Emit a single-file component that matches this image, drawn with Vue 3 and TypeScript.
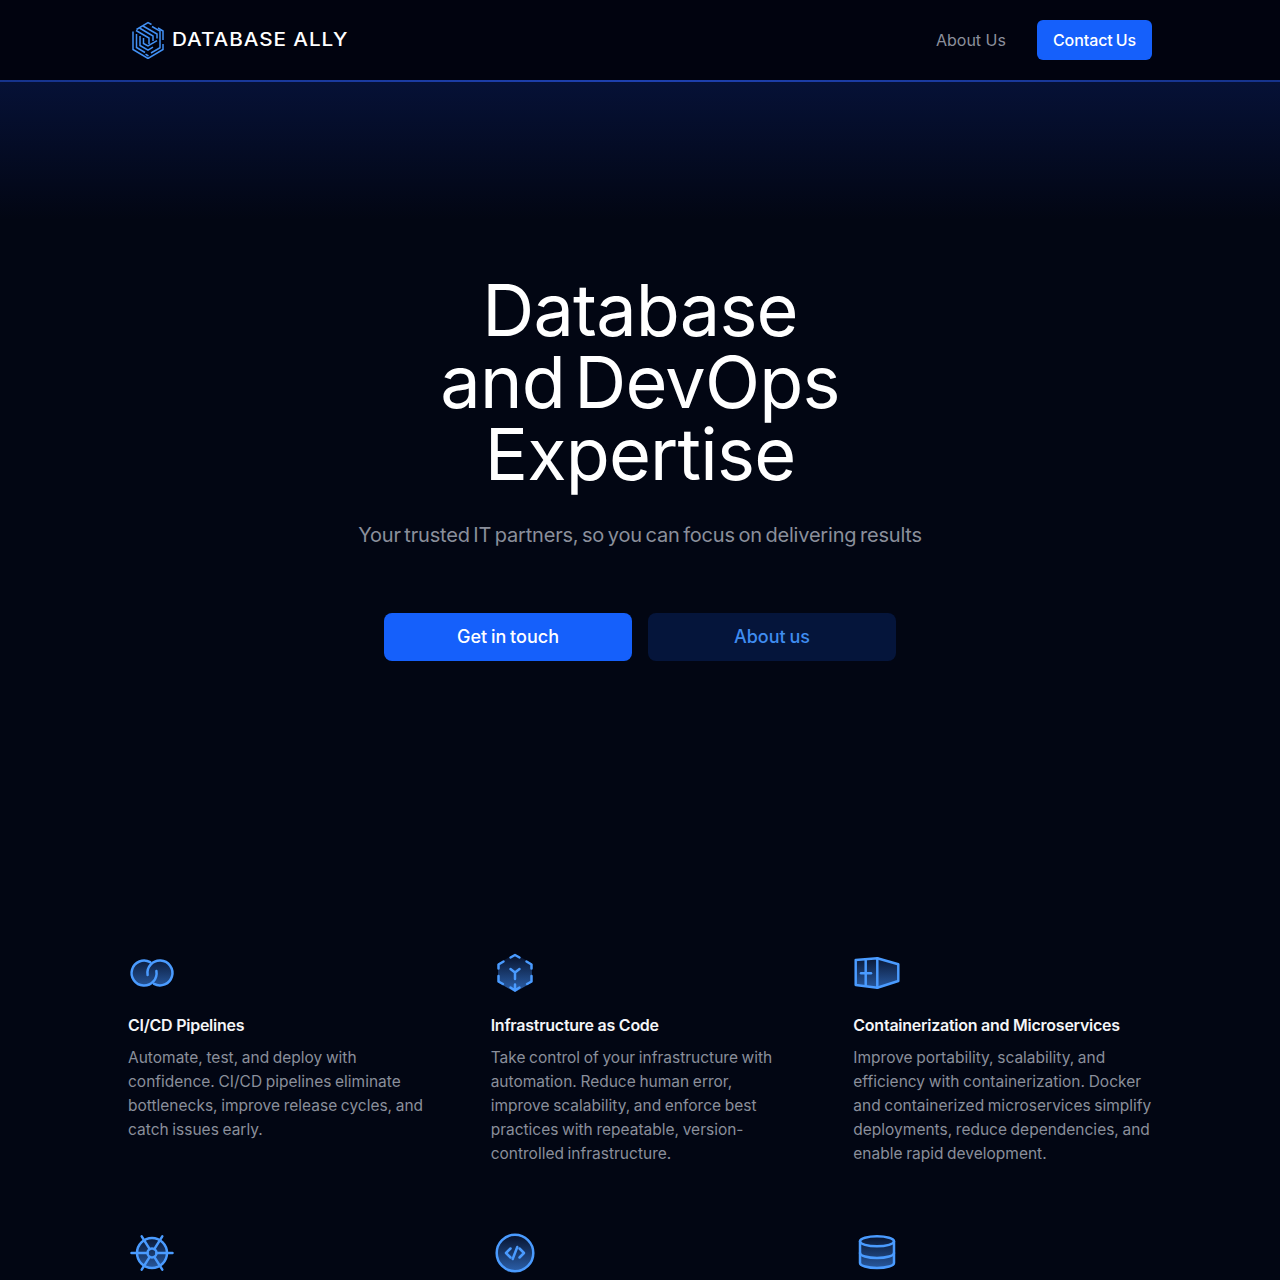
<template>
  <div class="page">
    <svg class="defs" width="0" height="0" aria-hidden="true">
      <defs>
        <linearGradient id="iconFill" gradientUnits="userSpaceOnUse" x1="0" y1="6" x2="0" y2="42">
          <stop offset="0" stop-color="#07122c" />
          <stop offset="1" stop-color="#2b5fa9" />
        </linearGradient>
      </defs>
    </svg>

    <header class="header">
      <div class="container nav">
        <a class="brand" href="#">
          <svg class="logo" viewBox="0 0 32 38" fill="none" stroke="#4291f5" stroke-width="1.5">
            <path d="M1 10.500v18l15 9 15-9V23M31 19v-9l-5-3M4.500 8.500 16 1.500l3.500 2" />
            <path d="M11 5l14 8v4.500M7.500 7 21 15v5M4 9.500 17 17v6" />
            <path d="M4.500 13v13.500L13 31.500M8 15v9.500l8 4.700 5-3M11.500 17v5.500l4.500 2.500 9-5.300" />
            <path d="M28 9v17.700l-9 5.300M16.500 35l-3-1.800M20 5.500l8 4.700" />
          </svg>
          <span class="brand-name">DATABASE ALLY</span>
        </a>
        <nav class="links">
          <a class="link" href="#">About Us</a>
          <a class="contact" href="#">Contact Us</a>
        </nav>
      </div>
    </header>

    <main>
      <section class="hero">
        <h1>Database<br />and DevOps<br />Expertise</h1>
        <p class="lead">Your trusted IT partners, so you can focus on delivering results</p>
        <div class="actions">
          <a class="btn primary" href="#">Get in touch</a>
          <a class="btn secondary" href="#">About us</a>
        </div>
      </section>

      <section class="container features">
        <article v-for="item in features" :key="item.id" class="feature">
          <svg class="icon" viewBox="0 0 48 48" width="48" height="48">
            <path :d="item.area" fill="url(#iconFill)" />
            <path
              v-for="line in item.lines"
              :key="line"
              :d="line"
              fill="none"
              stroke="#4a9bff"
              stroke-width="2.500"
              stroke-linecap="round"
              stroke-linejoin="round"
            />
          </svg>
          <template v-if="item.title">
            <h3>{{ item.title }}</h3>
            <p>{{ item.text }}</p>
          </template>
        </article>
      </section>
    </main>
  </div>
</template>

<script setup lang="ts">
interface Feature {
  id: string
  title?: string
  text?: string
  area: string
  lines: string[]
}

const features: Feature[] = [
  {
    id: "cicd",
    title: "CI/CD Pipelines",
    text: "Automate, test, and deploy with confidence. CI/CD pipelines eliminate bottlenecks, improve release cycles, and catch issues early.",
    area: "M16 11.500a12.500 12.500 0 1 0 8 22.100 12.500 12.500 0 1 0 0-19.200A12.500 12.500 0 0 0 16 11.500z",
    lines: [
      "M22.200 13.200A12.500 12.500 0 1 0 28.400 22",
      "M26 34.960A12.500 12.500 0 1 0 19.600 26",
    ],
  },
  {
    id: "iac",
    title: "Infrastructure as Code",
    text: "Take control of your infrastructure with automation. Reduce human error, improve scalability, and enforce best practices with repeatable, version-controlled infrastructure.",
    area: "M24 5 41 14.500v19L24 43 7 33.500v-19z",
    lines: [
      "M19.500 8.500 24 6l4.500 2.500",
      "M35.500 12.500 40.500 15.500v4",
      "M12.500 12.500 7.500 15.500v4",
      "M7.500 27v5.500L12 35",
      "M40.500 27v5.500L36 35",
      "M19.500 20 24 23.500 28.500 20M24 23.500V30",
      "M19.500 38.500 24 41.500l4.500-3M24 35.500v6",
    ],
  },
  {
    id: "containers",
    title: "Containerization and Microservices",
    text: "Improve portability, scalability, and efficiency with containerization. Docker and containerized microservices simplify deployments, reduce dependencies, and enable rapid development.",
    area: "M2.700 11 24.300 9.300 45.300 15.300V32L24.300 38.700 2.700 36z",
    lines: [
      "M2.700 11 24.300 9.300 45.300 15.300V32L24.300 38.700 2.700 36z",
      "M24.300 9.300V38.700",
      "M12.700 10.500V36.500",
      "M8 24.300H18",
    ],
  },
  {
    id: "kubernetes",
    area: "M24 9a15 15 0 1 0 0 30 15 15 0 1 0 0-30z",
    lines: [
      "M24 9a15 15 0 1 0 0 30 15 15 0 1 0 0-30z",
      "M24 19.500a4.500 4.500 0 1 0 0 9 4.500 4.500 0 1 0 0-9z",
      "M3.500 24H19.500M28.500 24H44.500",
      "M13.700 7.300 21.700 20.100M26.300 27.900 34.300 40.700",
      "M34.300 7.300 26.300 20.100M21.700 27.900 13.700 40.700",
    ],
  },
  {
    id: "code",
    area: "M24 5.700a18.300 18.300 0 1 0 0 36.600 18.300 18.300 0 1 0 0-36.600z",
    lines: [
      "M24 5.700a18.300 18.300 0 1 0 0 36.600 18.300 18.300 0 1 0 0-36.600z",
      "M19.500 19.500 15 24l4.500 4.500",
      "M28.500 19.500 33 24l-4.500 4.500",
      "M26.300 18 21.700 30",
    ],
  },
  {
    id: "database",
    area: "M7 12.300c0-2.800 7.600-5 17-5s17 2.200 17 5V34c0 2.800-7.600 5-17 5S7 36.800 7 34z",
    lines: [
      "M7 12.300c0-2.800 7.600-5 17-5s17 2.200 17 5-7.600 5-17 5-17-2.200-17-5z",
      "M7 12.300V34c0 2.800 7.600 5 17 5s17-2.200 17-5V12.300",
      "M7 24c0 2.800 7.600 5 17 5s17-2.200 17-5",
    ],
  },
]
</script>

<style>
html,
body {
  margin: 0;
  background: #020613;
}
</style>

<style scoped>
.page {
  min-height: 1280px;
  background: #020613;
  font-family: Inter, "Noto Sans", sans-serif;
  color: #fff;
}

.defs {
  position: absolute;
}

.container {
  width: 1024px;
  margin: 0 auto;
}

.header {
  height: 80px;
  background: #01030f;
  border-bottom: 2px solid transparent;
  border-image: linear-gradient(90deg, #16338c, #1e40af 50%, #16338c) 1;
}

.nav {
  height: 100%;
  display: flex;
  align-items: center;
  justify-content: space-between;
}

.brand {
  display: flex;
  align-items: center;
  gap: 8px;
  margin-left: 4px;
  color: #fff;
  text-decoration: none;
}

.logo {
  width: 32px;
  height: 38px;
}

.brand-name {
  font-size: 18px;
  line-height: 24px;
  font-weight: 500;
  letter-spacing: 0.8px;
  white-space: nowrap;
  transform: scaleX(1.15);
  transform-origin: left center;
}

.links {
  display: flex;
  align-items: center;
  gap: 31px;
}

.link {
  font-size: 16px;
  color: #8b8f9c;
  text-decoration: none;
}

.contact {
  height: 40px;
  line-height: 40px;
  padding: 0 16px;
  border-radius: 6px;
  background: #1560fb;
  color: #fff;
  font-size: 16px;
  font-weight: 500;
  letter-spacing: -0.08px;
  word-spacing: -1.2px;
  text-decoration: none;
}

.hero {
  padding-top: 192px;
  background: linear-gradient(180deg, #061136 0, #020613 138px);
  text-align: center;
}

h1 {
  margin: 0;
  font-size: 72px;
  line-height: 72px;
  font-weight: 400;
  letter-spacing: -0.8px;
  word-spacing: -10px;
}

.lead {
  margin: 31px 0 0;
  font-size: 20px;
  line-height: 28px;
  color: #8a8f9b;
  letter-spacing: -0.2px;
  word-spacing: -1.8px;
}

.actions {
  display: flex;
  justify-content: center;
  gap: 16px;
  margin-top: 64px;
}

.btn {
  width: 248px;
  height: 48px;
  line-height: 48px;
  border-radius: 8px;
  font-size: 18px;
  font-weight: 500;
  word-spacing: -1px;
  text-decoration: none;
}

.primary {
  background: #1560fb;
  color: #fff;
}

.secondary {
  background: #05153b;
  color: #3f8cf0;
}

.features {
  display: grid;
  grid-template-columns: repeat(3, 1fr);
  column-gap: 64px;
  row-gap: 63px;
  margin-top: 288px;
}

.icon {
  display: block;
}

h3 {
  margin: 16px 0 0;
  font-size: 16px;
  line-height: 24px;
  font-weight: 600;
  letter-spacing: -0.25px;
  color: #f4f5f7;
}

.feature p {
  margin: 9px 0 0;
  font-size: 15.5px;
  line-height: 24px;
  word-spacing: -0.7px;
  color: #8a8f9b;
}
</style>
